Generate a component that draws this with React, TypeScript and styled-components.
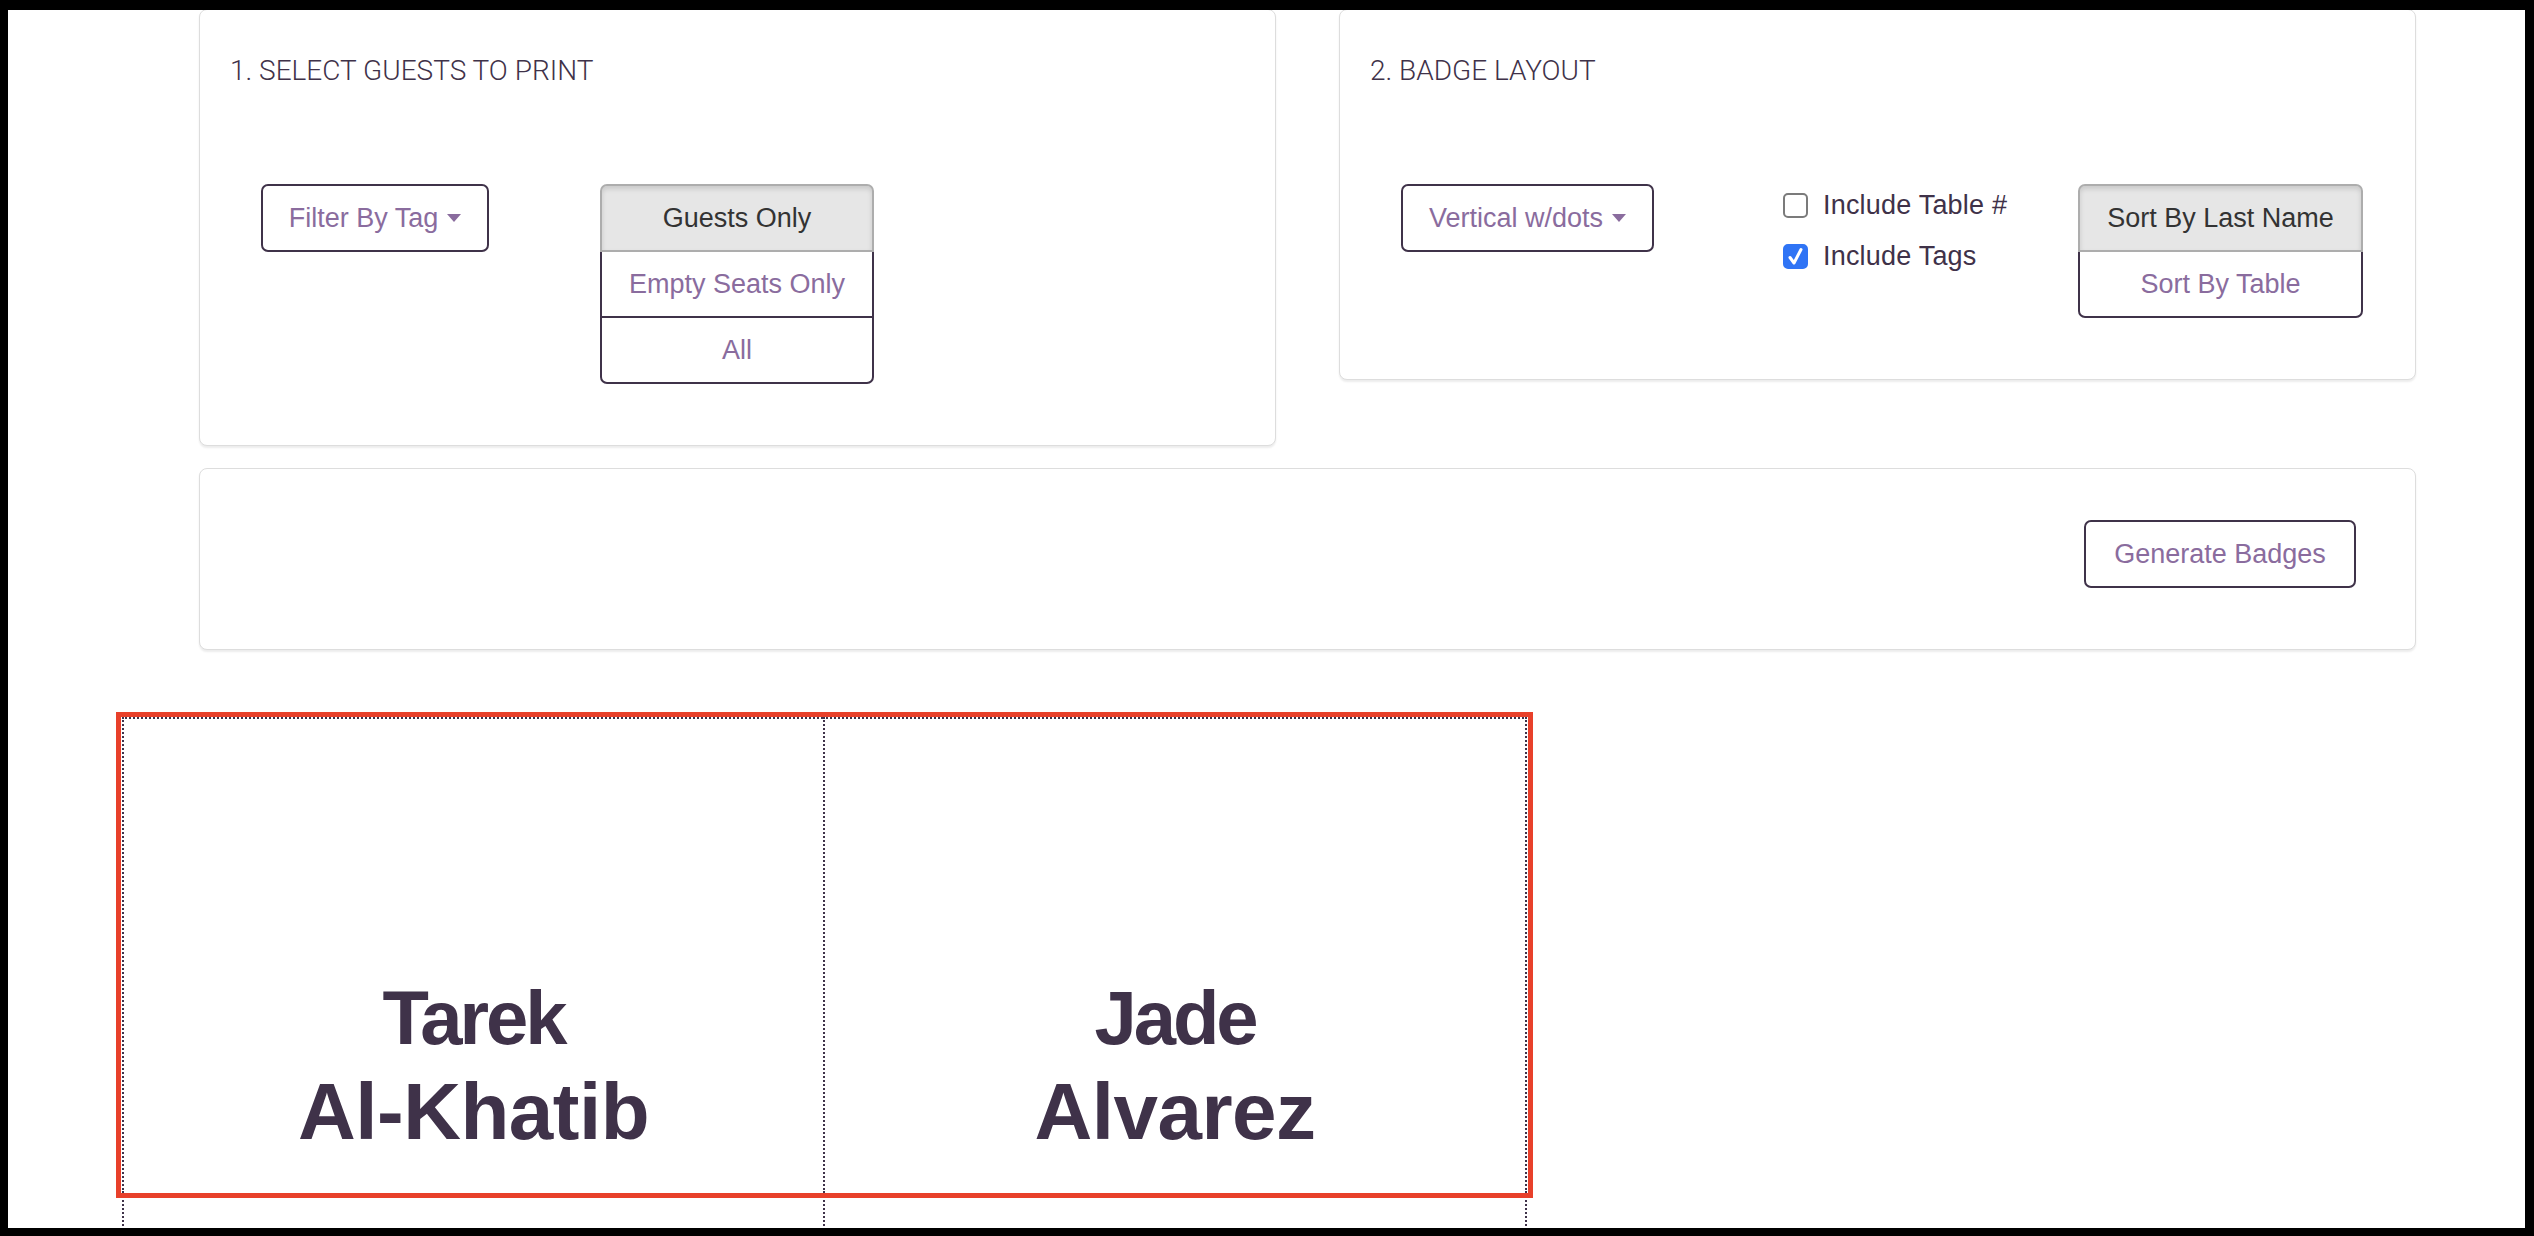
import React from "react";
import styled, { createGlobalStyle, css } from "styled-components";

const GlobalStyle = createGlobalStyle`
  html, body { margin: 0; padding: 0; background: #000; }
  body { font-family: "Liberation Sans", Arial, sans-serif; }
  * { box-sizing: border-box; }
`;

const PURPLE = "#8a6c9e";
const DARK = "#3f3249";

const Frame = styled.div`
  margin: 10px 9px 8px 8px;
  height: 1218px;
  background: #fff;
  overflow: hidden;
`;

const Container = styled.div`
  width: 2217px;
  margin-left: 191px;
  margin-top: -1px;
  display: flex;
  flex-direction: column;
  gap: 22px;
`;

const CardRow = styled.div`
  display: flex;
  align-items: flex-start;
  gap: 63px;
`;

const Card = styled.section`
  flex: 1;
  background: #fff;
  border: 1px solid #ddd;
  border-radius: 8px;
  box-shadow: 0 2px 2px rgba(0, 0, 0, 0.08);
`;

const CardBody = styled.div`
  padding: 44px 30px 61px 30px;
`;

const Title = styled.h3`
  margin: 0 0 97px 0;
  font-family: Roboto, "Liberation Sans", sans-serif;
  font-weight: 300;
  font-size: 28px;
  line-height: 33px;
  color: ${DARK};
`;

const Controls = styled.div<{ $gap: number }>`
  display: flex;
  align-items: flex-start;
  padding-left: 31px;
  gap: ${(p) => p.$gap}px;
`;

const Button = styled.button<{ $active?: boolean; $width?: number }>`
  font-family: "Liberation Sans", Arial, sans-serif;
  font-size: 27px;
  line-height: 38px;
  height: 68px;
  padding: 0 25px;
  ${(p) => p.$width && css`width: ${p.$width}px;`}
  color: ${PURPLE};
  background: #fff;
  border: 2px solid ${DARK};
  border-radius: 7px;
  cursor: pointer;
  display: inline-flex;
  align-items: center;
  justify-content: center;
  white-space: nowrap;
  flex: none;
  ${(p) =>
    p.$active &&
    css`
      color: #333;
      background: #e6e6e6;
      border-color: #adadad;
      box-shadow: inset 0 3px 5px rgba(0, 0, 0, 0.125);
      z-index: 2;
    `}
`;

const Caret = styled.span`
  display: inline-block;
  width: 0;
  height: 0;
  margin-left: 9px;
  border-top: 8px solid ${PURPLE};
  border-left: 7px solid transparent;
  border-right: 7px solid transparent;
`;

const VGroup = styled.div<{ $width: number; $offset?: number }>`
  display: flex;
  flex-direction: column;
  width: ${(p) => p.$width}px;
  margin-left: ${(p) => p.$offset ?? 0}px;

  & > ${Button} {
    position: relative;
    width: 100%;
    border-radius: 0;
  }
  & > ${Button} + ${Button} {
    margin-top: -2px;
  }
  & > ${Button}:first-child {
    border-top-left-radius: 7px;
    border-top-right-radius: 7px;
  }
  & > ${Button}:last-child {
    border-bottom-left-radius: 7px;
    border-bottom-right-radius: 7px;
  }
`;

const DropdownSlot = styled.div`
  margin-right: 129px;
`;

const CheckList = styled.div`
  display: flex;
  flex-direction: column;
  margin-top: -4px;
  width: 230px;
`;

const CheckRow = styled.label`
  display: flex;
  align-items: center;
  gap: 15px;
  height: 51px;
  font-size: 27px;
  letter-spacing: 0.2px;
  color: ${DARK};
  white-space: nowrap;
  cursor: pointer;
`;

const Box = styled.span<{ $checked: boolean }>`
  width: 25px;
  height: 25px;
  flex: none;
  border-radius: 5px;
  display: inline-flex;
  align-items: center;
  justify-content: center;
  ${(p) =>
    p.$checked
      ? css`
          background: #2f74f5;
          border: 2px solid #2f74f5;
        `
      : css`
          background: #fff;
          border: 2px solid #7b7b7b;
        `}
`;

const ActionBody = styled.div`
  display: flex;
  justify-content: flex-end;
  padding: 51px 59px 61px 30px;
`;

const Sheet = styled.div`
  position: relative;
  margin-left: 114px;
  margin-top: 67px;
  display: grid;
  grid-template-columns: 701px 704px;
  grid-auto-rows: 476px;
  width: 1405px;
`;

const Badge = styled.div<{ $last?: boolean }>`
  border-top: 2px dotted ${DARK};
  border-left: 2px dotted ${DARK};
  ${(p) => p.$last && css`border-right: 2px dotted ${DARK};`}
  display: flex;
  flex-direction: column;
  justify-content: flex-end;
  align-items: center;
  padding-bottom: 36px;
  color: ${DARK};
  font-family: "Liberation Sans", Arial, sans-serif;
  font-weight: 700;
  text-align: center;
`;

const FirstName = styled.div`
  font-size: 76px;
  letter-spacing: -3px;
  line-height: 96px;
`;

const LastName = styled.div`
  font-size: 80px;
  letter-spacing: -0.5px;
  line-height: 91px;
`;

const PageFrame = styled.div`
  position: absolute;
  left: -6px;
  top: -5px;
  width: 1417px;
  height: 486px;
  border: 5px solid #e8402a;
  pointer-events: none;
`;

function Checkbox({ checked, label }: { checked: boolean; label: string }) {
  return (
    <CheckRow>
      <Box $checked={checked}>
        {checked && (
          <svg width="17" height="19" viewBox="0 0 17 19">
            <path
              d="M3 10.5 L7 16 L14 2.5"
              fill="none"
              stroke="#fff"
              strokeWidth="3"
              strokeLinecap="round"
              strokeLinejoin="round"
            />
          </svg>
        )}
      </Box>
      {label}
    </CheckRow>
  );
}

const badges = [
  { first: "Tarek", last: "Al-Khatib" },
  { first: "Jade", last: "Alvarez" },
  { first: "", last: "" },
  { first: "", last: "" },
];

export default function App() {
  return (
    <>
      <GlobalStyle />
      <Frame>
        <Container>
          <CardRow>
            <Card>
              <CardBody>
                <Title>1. SELECT GUESTS TO PRINT</Title>
                <Controls $gap={111}>
                  <Button $width={228}>
                    Filter By Tag<Caret />
                  </Button>
                  <VGroup $width={274}>
                    <Button $active>Guests Only</Button>
                    <Button>Empty Seats Only</Button>
                    <Button>All</Button>
                  </VGroup>
                </Controls>
              </CardBody>
            </Card>
            <Card>
              <CardBody>
                <Title>2. BADGE LAYOUT</Title>
                <Controls $gap={0}>
                  <DropdownSlot>
                    <Button $width={253}>
                      Vertical w/dots<Caret />
                    </Button>
                  </DropdownSlot>
                  <CheckList>
                    <Checkbox checked={false} label="Include Table #" />
                    <Checkbox checked label="Include Tags" />
                  </CheckList>
                  <VGroup $width={285} $offset={65}>
                    <Button $active>Sort By Last Name</Button>
                    <Button>Sort By Table</Button>
                  </VGroup>
                </Controls>
              </CardBody>
            </Card>
          </CardRow>
          <Card>
            <ActionBody>
              <Button $width={272}>Generate Badges</Button>
            </ActionBody>
          </Card>
        </Container>
        <Sheet>
          {badges.map((b, i) => (
            <Badge key={i} $last={i % 2 === 1}>
              {b.first && <FirstName>{b.first}</FirstName>}
              {b.last && <LastName>{b.last}</LastName>}
            </Badge>
          ))}
          <PageFrame />
        </Sheet>
      </Frame>
    </>
  );
}
